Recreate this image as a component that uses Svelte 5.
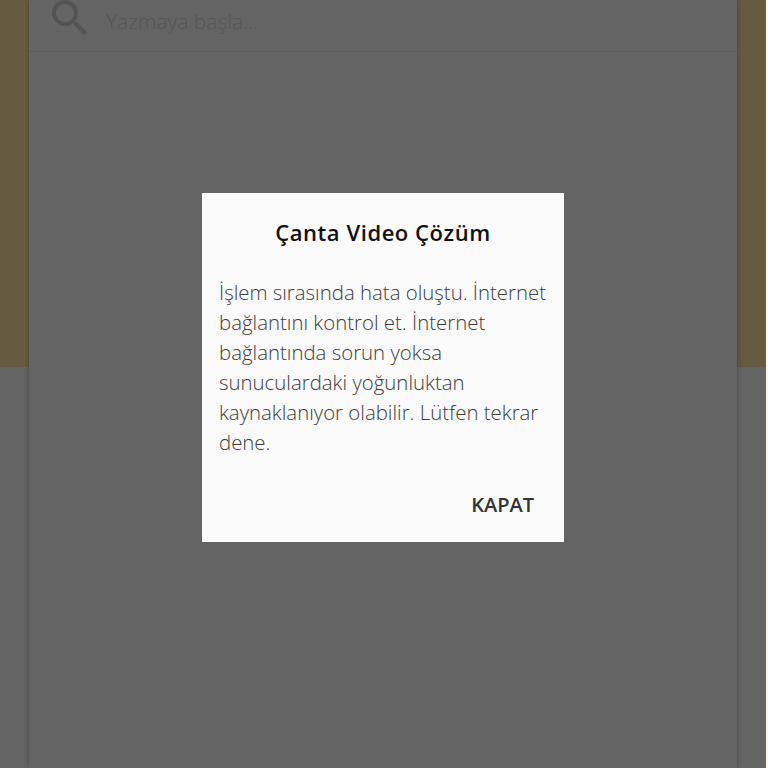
<script>
  const title = "Çanta Video Çözüm";
  const message =
    "İşlem sırasında hata oluştu. İnternet bağlantını kontrol et. İnternet bağlantında sorun yoksa sunuculardaki yoğunluktan kaynaklanıyor olabilir. Lütfen tekrar dene.";
</script>

<div class="page">
  <div class="hero"></div>
  <div class="panel">
    <div class="search">
      <svg class="search-icon" viewBox="0 0 24 24" width="48" height="48">
        <path
          d="M15.5 14h-.79l-.28-.27A6.47 6.47 0 0 0 16 9.5 6.5 6.5 0 1 0 9.5 16c1.61 0 3.09-.59 4.23-1.57l.27.28v.79l5 4.99L20.49 19l-4.99-5zm-6 0C7.01 14 5 11.99 5 9.5S7.01 5 9.5 5 14 7.01 14 9.5 11.99 14 9.5 14z"
        />
      </svg>
      <span class="placeholder">Yazmaya başla...</span>
    </div>
  </div>

  <div class="overlay">
    <div class="dialog">
      <h2>{title}</h2>
      <p>{message}</p>
      <div class="actions">
        <button>KAPAT</button>
      </div>
    </div>
  </div>
</div>

<style>
  :global(body) {
    margin: 0;
    background: #fdf8ec;
  }
  .page {
    position: relative;
    width: 766px;
    height: 768px;
    overflow: hidden;
    background: #fafafa;
    font-family: "Open Sans", "Noto Sans", sans-serif;
  }
  .hero {
    height: 367px;
    background: #ffe0a0;
  }
  .panel {
    position: absolute;
    top: 0;
    left: 29px;
    right: 29px;
    bottom: 0;
    background: #fafafa;
    box-shadow: 0 0 4px rgba(0, 0, 0, 0.35);
  }
  .search {
    display: flex;
    align-items: center;
    gap: 12px;
    height: 60px;
    margin-top: -9px;
    padding-left: 17px;
    border-bottom: 1px solid #e2e2e2;
  }
  .search-icon {
    fill: #cfcfcf;
    flex-shrink: 0;
    margin-top: -7px;
  }
  .placeholder {
    font-size: 21px;
    font-weight: 300;
    color: #d8d8d8;
  }
  .overlay {
    position: absolute;
    inset: 0;
    display: flex;
    align-items: center;
    justify-content: center;
    padding-bottom: 33px;
    box-sizing: border-box;
    background: rgba(0, 0, 0, 0.6);
  }
  .dialog {
    width: 362px;
    height: 349px;
    box-sizing: border-box;
    padding: 24px 17px 0;
    background: #fafafa;
    display: flex;
    flex-direction: column;
  }
  h2 {
    margin: 0;
    text-align: center;
    font-size: 22px;
    line-height: 30px;
    font-weight: 600;
    letter-spacing: 0.55px;
    color: #111;
  }
  p {
    margin: 30px 0 0;
    font-size: 20.4px;
    line-height: 30.1px;
    font-weight: 300;
    color: #3c3c3c;
  }
  .actions {
    margin-top: 33px;
    display: flex;
    justify-content: flex-end;
    padding-right: 13px;
  }
  button {
    border: none;
    background: none;
    padding: 0;
    font-family: inherit;
    font-size: 20px;
    font-weight: 600;
    color: #333;
  }
</style>
